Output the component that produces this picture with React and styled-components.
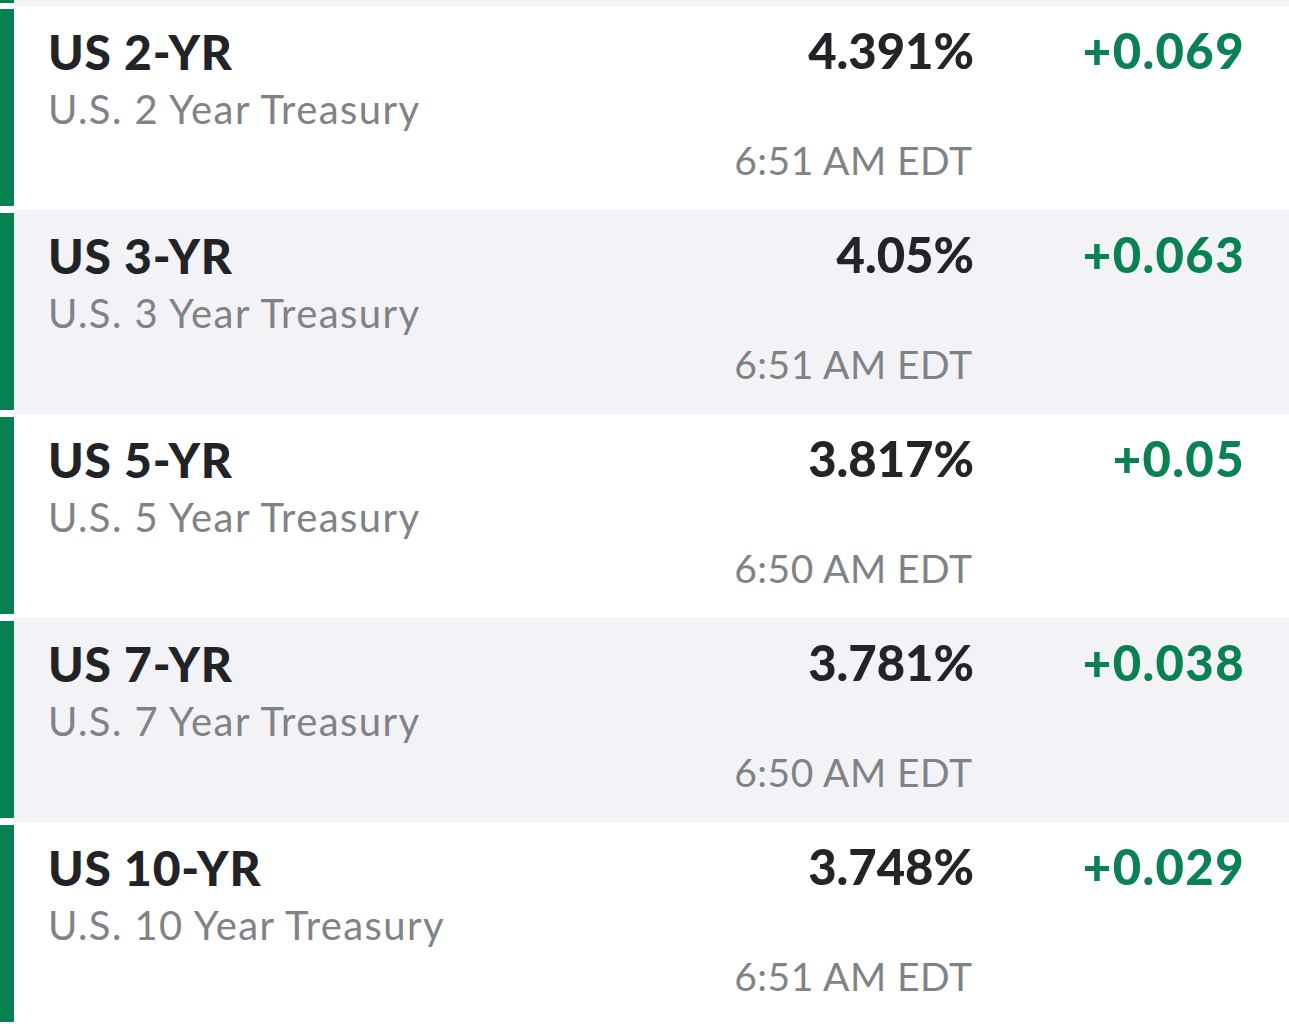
import React from "react";
import styled, { createGlobalStyle } from "styled-components";

const Global = createGlobalStyle`
  html, body { margin: 0; padding: 0; background: #ffffff; }
  body { font-family: Lato, "Noto Sans", sans-serif; -webkit-font-smoothing: antialiased; }
`;

const List = styled.div`
  width: 1289px;
  height: 1024px;
  overflow: hidden;
  background: #ffffff;
  display: flex;
  flex-direction: column;
`;

const TopStrip = styled.div`
  display: flex;
  height: 6px;
  flex: none;
`;

const StripGutter = styled.div`
  width: 14px;
  background: #ffffff;
`;

const StripBar = styled.div`
  height: 3px;
  background: #07814f;
`;

const StripFill = styled.div`
  flex: 1;
  background: #f3f3f7;
`;

const Row = styled.div`
  display: flex;
  height: 204px;
  flex: none;
`;

const Gutter = styled.div`
  width: 14px;
  flex: none;
  display: flex;
  flex-direction: column;
  background: #ffffff;
`;

const Bar = styled.div`
  flex: 1;
  margin: 3px 0 4px;
  background: #07814f;
`;

const Body = styled.div`
  flex: 1;
  display: grid;
  grid-template-columns: 1fr auto 270px;
  padding: 0 47px 0 34px;
  background: ${(p) => (p.$alt ? "#f3f3f7" : "#ffffff")};
`;

const NameCol = styled.div`
  display: flex;
  flex-direction: column;
`;

const Symbol = styled.div`
  margin-top: 22px;
  font-size: 48px;
  line-height: 48px;
  font-weight: 900;
  color: #222327;
  letter-spacing: 0.8px;
`;

const Name = styled.div`
  margin-top: 13px;
  font-size: 40px;
  line-height: 40px;
  font-weight: 400;
  color: #808285;
  letter-spacing: 1.4px;
`;

const PriceCol = styled.div`
  display: flex;
  flex-direction: column;
  align-items: flex-end;
`;

const Price = styled.div`
  margin-top: 20px;
  margin-right: -2px;
  font-size: 49px;
  line-height: 49px;
  font-weight: 900;
  color: #232427;
`;

const Time = styled.div`
  margin-top: 66px;
  margin-right: -0.5px;
  font-size: 39px;
  line-height: 39px;
  font-weight: 400;
  color: #808285;
  letter-spacing: 0.5px;
`;

const Change = styled.div`
  margin-top: 20px;
  margin-right: -3px;
  font-size: 49px;
  line-height: 49px;
  font-weight: 900;
  color: #0a8150;
  text-align: right;
  letter-spacing: 1.4px;
`;

const rows = [
  { sym: "US 2-YR", name: "U.S. 2 Year Treasury", price: "4.391%", chg: "+0.069", time: "6:51 AM EDT" },
  { sym: "US 3-YR", name: "U.S. 3 Year Treasury", price: "4.05%", chg: "+0.063", time: "6:51 AM EDT" },
  { sym: "US 5-YR", name: "U.S. 5 Year Treasury", price: "3.817%", chg: "+0.05", time: "6:50 AM EDT" },
  { sym: "US 7-YR", name: "U.S. 7 Year Treasury", price: "3.781%", chg: "+0.038", time: "6:50 AM EDT" },
  { sym: "US 10-YR", name: "U.S. 10 Year Treasury", price: "3.748%", chg: "+0.029", time: "6:51 AM EDT" },
];

export default function App() {
  return (
    <List>
      <Global />
      <TopStrip>
        <StripGutter>
          <StripBar />
        </StripGutter>
        <StripFill />
      </TopStrip>
      {rows.map((r, i) => (
        <Row key={r.sym}>
          <Gutter>
            <Bar />
          </Gutter>
          <Body $alt={i % 2 === 1}>
            <NameCol>
              <Symbol>{r.sym}</Symbol>
              <Name>{r.name}</Name>
            </NameCol>
            <PriceCol>
              <Price>{r.price}</Price>
              <Time>{r.time}</Time>
            </PriceCol>
            <Change>{r.chg}</Change>
          </Body>
        </Row>
      ))}
    </List>
  );
}
